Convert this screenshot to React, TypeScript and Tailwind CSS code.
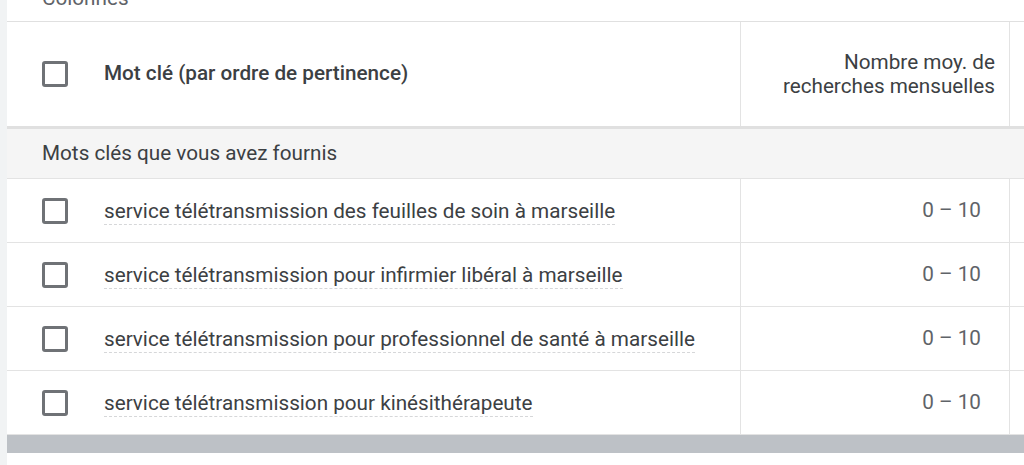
import { ReactNode } from 'react';

const keywords = [
  'service télétransmission des feuilles de soin à marseille',
  'service télétransmission pour infirmier libéral à marseille',
  'service télétransmission pour professionnel de santé à marseille',
  'service télétransmission pour kinésithérapeute',
];

function Checkbox() {
  return (
    <div className="w-[26px] h-[26px] shrink-0 rounded-[3px] border-[3px] border-[#6f7276] bg-white" />
  );
}

function Row({ children, value }: { children: ReactNode; value: string }) {
  return (
    <div className="flex h-[64px] shrink-0 border-b border-[#e3e3e3]">
      <div className="w-[734px] flex items-center pl-[35px] border-r border-[#e3e3e3]">
        <Checkbox />
        <span className="ml-[36px] mt-[2px] text-[20.7px] text-[#3c4043] border-b border-dashed border-[#d6d7d9] leading-[26px]">
          {children}
        </span>
      </div>
      <div className="w-[269px] flex items-center justify-end pr-[28px] border-r border-[#e3e3e3] text-[20.7px] text-[#5f6368]">
        {value}
      </div>
      <div className="flex-1" />
    </div>
  );
}

export default function App() {
  return (
    <div className="w-[1024px] h-[465px] flex bg-white font-['Roboto',_'Liberation_Sans',_sans-serif] overflow-hidden">
      {/* side strip */}
      <div className="w-[7px] bg-[#f1f3f4] shrink-0" />

      <div className="flex-1 flex flex-col">
        {/* Colonnes (cut off) */}
        <div className="h-[22px] shrink-0 overflow-hidden border-b border-[#e0e0e0] pl-[35px]">
          <div className="-mt-[14px] text-[20.7px] leading-[24px] text-[#5f6368]">Colonnes</div>
        </div>

        {/* Header */}
        <div className="flex h-[107px] shrink-0 border-b-[3px] border-[#e0e0e0]">
          <div className="w-[734px] flex items-center pl-[35px] border-r border-[#e3e3e3]">
            <Checkbox />
            <span className="ml-[36px] text-[20.7px] font-medium text-[#3c4043]">Mot clé (par ordre de pertinence)</span>
          </div>
          <div className="w-[269px] flex items-center justify-end pr-[14px] border-r border-[#e3e3e3] text-right text-[20.7px] leading-[24px] text-[#3c4043]">
            <div>
              Nombre moy. de
              <br />
              recherches mensuelles
            </div>
          </div>
          <div className="flex-1" />
        </div>

        {/* Section */}
        <div className="h-[50px] shrink-0 flex items-center pl-[35px] bg-[#f5f5f5] border-b border-[#e3e3e3] text-[20.7px] text-[#3c4043]">
          Mots clés que vous avez fournis
        </div>

        {keywords.map((k) => (
          <Row key={k} value="0 – 10">
            {k}
          </Row>
        ))}

        {/* scrollbar */}
        <div className="h-[18px] shrink-0 bg-[#bdc1c6]" />
        <div className="h-[12px] shrink-0 bg-white" />
      </div>
    </div>
  );
}
